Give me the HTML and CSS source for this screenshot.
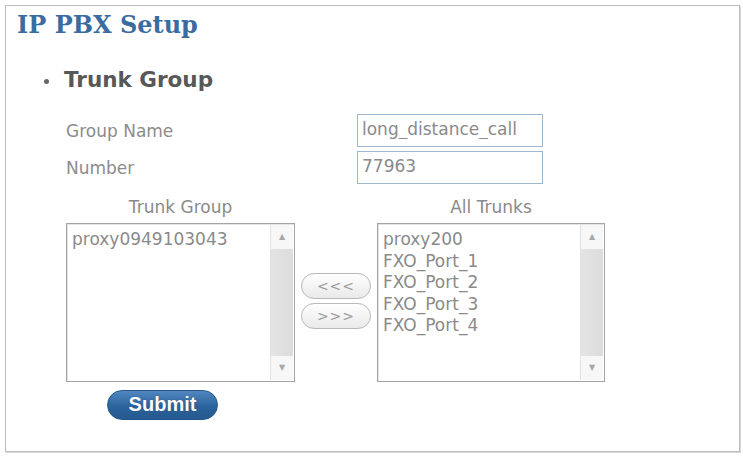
FILE: index.html
```html
<!DOCTYPE html>
<html lang="en">
<head>
    <meta charset="UTF-8">
    <meta name="viewport" content="width=device-width, initial-scale=1.0">
    <title>IP PBX Setup</title>
    <link rel="stylesheet" href="styles.css">
</head>
<body>
    <div class="panel">
        <h1 class="title">IP PBX Setup</h1>
        <h2 class="section"><span class="dot"></span>Trunk Group</h2>

        <form id="trunkForm">
            <div class="fields">
                <label for="groupName">Group Name</label>
                <input type="text" id="groupName" value="long_distance_call">

                <label for="groupNumber">Number</label>
                <input type="text" id="groupNumber" value="77963">
            </div>

            <div class="lists">
                <div class="col">
                    <div class="caption">Trunk Group</div>
                    <div class="listbox">
                        <div class="items">
                            <div>proxy0949103043</div>
                        </div>
                        <div class="scroll">
                            <span class="arrow">&#9650;</span>
                            <span class="track"></span>
                            <span class="arrow">&#9660;</span>
                        </div>
                    </div>
                </div>

                <div class="movers">
                    <button type="button" class="move">&lt;&lt;&lt;</button>
                    <button type="button" class="move">&gt;&gt;&gt;</button>
                </div>

                <div class="col">
                    <div class="caption">All Trunks</div>
                    <div class="listbox">
                        <div class="items">
                            <div>proxy200</div>
                            <div>FXO_Port_1</div>
                            <div>FXO_Port_2</div>
                            <div>FXO_Port_3</div>
                            <div>FXO_Port_4</div>
                        </div>
                        <div class="scroll">
                            <span class="arrow">&#9650;</span>
                            <span class="track"></span>
                            <span class="arrow">&#9660;</span>
                        </div>
                    </div>
                </div>
            </div>

            <button type="button" class="submit">Submit</button>
        </form>
    </div>
</body>
</html>
```

FILE: styles.css
```css
body {
    margin: 0;
    padding: 5px;
    background-color: #fff;
    font-family: "DejaVu Sans", Verdana, sans-serif;
}

.panel {
    width: 735px;
    height: 447px;
    box-sizing: border-box;
    border: 1px solid #bdbdbd;
    box-shadow: 1px 1px 0 #d6d6d6;
}

.title {
    margin: 5px 0 0 11px;
    font-family: "DejaVu Serif", Georgia, serif;
    font-size: 24px;
    line-height: 28px;
    font-weight: bold;
    color: #3b6c9f;
}

.section {
    margin: 28px 0 0 38px;
    font-size: 21.5px;
    line-height: 26px;
    font-weight: bold;
    color: #585858;
}

.dot {
    display: inline-block;
    width: 5px;
    height: 5px;
    margin-right: 15px;
    border-radius: 50%;
    background-color: #666;
    vertical-align: 3px;
}

.fields {
    display: grid;
    grid-template-columns: 291px 186px;
    row-gap: 4px;
    align-items: center;
    margin: 21px 0 0 60px;
}

.fields label {
    font-size: 17px;
    color: #8c8c8c;
}

.fields input {
    height: 33px;
    box-sizing: border-box;
    padding: 0 4px 4px;
    border: 1px solid #9db7d0;
    font-family: "DejaVu Sans", Verdana, sans-serif;
    font-size: 17px;
    color: #8a8a8a;
}

.lists {
    display: flex;
    margin: 13px 0 0 60px;
}

.col {
    width: 229px;
}

.col:last-child {
    width: 228px;
}

.caption {
    font-size: 17px;
    line-height: 20px;
    color: #8a8a8a;
    text-align: center;
    margin-bottom: 6px;
}

.listbox {
    display: flex;
    height: 159px;
    box-sizing: border-box;
    border: 1px solid #a4a4a4;
    box-shadow: inset 1px 1px 0 #e4e4e4;
}

.items {
    flex: 1;
    padding: 5px 0 0 5px;
    font-size: 17px;
    line-height: 21.5px;
    color: #8a8a8a;
}

.scroll {
    display: flex;
    flex-direction: column;
    width: 22px;
    margin: 1px 1px 1px 0;
    border-left: 1px solid #e2e2e2;
}

.arrow {
    height: 24px;
    font-size: 8px;
    line-height: 24px;
    text-align: center;
    color: #a8a8a8;
    background-color: #f7f7f7;
}

.track {
    flex: 1;
    background: linear-gradient(to right, #e4e4e4, #dcdcdc);
}

.movers {
    width: 82px;
    display: flex;
    flex-direction: column;
    justify-content: center;
    align-items: center;
    gap: 4px;
    padding-top: 22px;
}

.move {
    width: 70px;
    height: 26px;
    padding: 0;
    border: 1px solid #b9b9b9;
    border-radius: 13px;
    background: linear-gradient(#fff, #e9e9e9);
    font-family: "DejaVu Sans", Verdana, sans-serif;
    font-size: 14px;
    letter-spacing: 1px;
    color: #999;
}

.submit {
    display: block;
    width: 111px;
    height: 30px;
    margin: 8px 0 0 101px;
    padding: 0 0 2px;
    border: 1px solid #23578a;
    border-radius: 15px;
    background: linear-gradient(#5087c0, #2b639c 55%, #25598f);
    font-family: "Liberation Sans", Arial, sans-serif;
    font-size: 20px;
    font-weight: bold;
    color: #fff;
    text-shadow: 0 0 1px #1b4775;
    cursor: pointer;
}
```
